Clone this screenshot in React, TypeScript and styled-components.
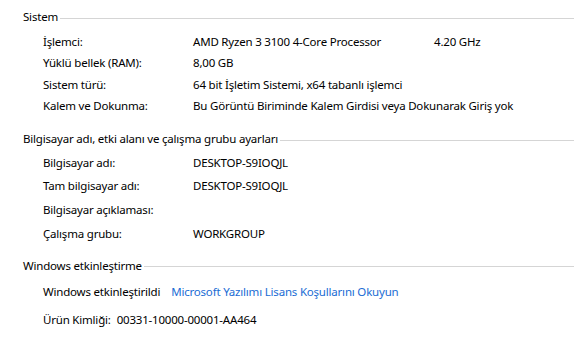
import React from 'react';
import styled, { createGlobalStyle } from 'styled-components';

const GlobalStyle = createGlobalStyle`
  html, body {
    margin: 0;
    padding: 0;
    background: #ffffff;
  }
  body {
    font-family: 'Noto Sans', 'Segoe UI', sans-serif;
    font-size: 11.5px;
    letter-spacing: -0.2px;
    color: #000000;
  }
`;

const Page = styled.div`
  width: 574px;
  height: 354px;
  box-sizing: border-box;
  padding: 9px 0 0 23px;
  overflow: hidden;
`;

const Section = styled.section<{ $top: number }>`
  margin-top: ${p => p.$top}px;
`;

const Header = styled.div`
  display: flex;
  align-items: center;
  height: 16px;
  line-height: 16px;
  white-space: nowrap;
`;

const Rule = styled.div`
  flex: 1;
  height: 1px;
  margin: 2px 0 0 2px;
  background: #d5d5d5;
`;

const Rows = styled.div<{ $gap: number; $row: number }>`
  display: grid;
  grid-template-columns: 150px 1fr;
  grid-auto-rows: ${p => p.$row}px;
  align-items: center;
  margin-top: ${p => p.$gap}px;
  padding-left: 20px;
`;

const Label = styled.div`
  white-space: nowrap;
`;

const Value = styled.div`
  display: flex;
  white-space: nowrap;
`;

const Processor = styled.span`
  width: 241px;
`;

const Line = styled.div<{ $gap: number }>`
  grid-column: 1 / -1;
  display: flex;
  gap: ${p => p.$gap}px;
  white-space: nowrap;
`;

const Link = styled.a`
  color: #1a6cd4;
  text-decoration: none;
  cursor: pointer;
`;

const system: [string, string][] = [
  ['Yüklü bellek (RAM):', '8,00 GB'],
  ['Sistem türü:', '64 bit İşletim Sistemi, x64 tabanlı işlemci'],
  ['Kalem ve Dokunma:', 'Bu Görüntü Biriminde Kalem Girdisi veya Dokunarak Giriş yok'],
];

const computer: [string, string][] = [
  ['Bilgisayar adı:', 'DESKTOP-S9IOQJL'],
  ['Tam bilgisayar adı:', 'DESKTOP-S9IOQJL'],
  ['Bilgisayar açıklaması:', ''],
  ['Çalışma grubu:', 'WORKGROUP'],
];

export default function App() {
  return (
    <Page>
      <GlobalStyle />
      <Section $top={0}>
        <Header>
          Sistem
          <Rule />
        </Header>
        <Rows $gap={6} $row={21.3}>
          <Label>İşlemci:</Label>
          <Value>
            <Processor>AMD Ryzen 3 3100 4-Core Processor</Processor>
            <span>4.20 GHz</span>
          </Value>
          {system.map(([k, v]) => (
            <React.Fragment key={k}>
              <Label>{k}</Label>
              <Value>{v}</Value>
            </React.Fragment>
          ))}
        </Rows>
      </Section>
      <Section $top={15}>
        <Header>
          Bilgisayar adı, etki alanı ve çalışma grubu ayarları
          <Rule />
        </Header>
        <Rows $gap={3} $row={23.7}>
          {computer.map(([k, v]) => (
            <React.Fragment key={k}>
              <Label>{k}</Label>
              <Value>{v}</Value>
            </React.Fragment>
          ))}
        </Rows>
      </Section>
      <Section $top={13}>
        <Header>
          Windows etkinleştirme
          <Rule />
        </Header>
        <Rows $gap={4} $row={28}>
          <Line $gap={11}>
            <span>Windows etkinleştirildi</span>
            <Link>Microsoft Yazılımı Lisans Koşullarını Okuyun</Link>
          </Line>
          <Line $gap={6}>
            <span>Ürün Kimliği:</span>
            <span>00331-10000-00001-AA464</span>
          </Line>
        </Rows>
      </Section>
    </Page>
  );
}
